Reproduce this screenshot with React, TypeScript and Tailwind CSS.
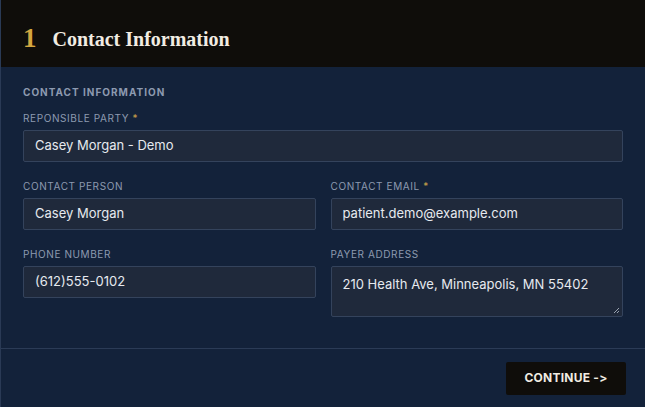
export default function App() {
  const label = "block text-[10px] tracking-[0.06em] text-[#8d9ab0] mb-[6px] leading-[12px]";
  const input = "w-full h-[32px] bg-[#1f293b] border border-[#34435c] rounded-[2px] px-[11px] text-[13px] text-[#e6e9ef] flex items-center";
  const star = <span className="text-[#c9a14a]"> *</span>;
  return (
    <div className="w-[645px] h-[407px] bg-[#13223a] flex flex-col border-l border-[#2a3a55]" style={{ fontFamily: "Inter, 'Open Sans', sans-serif" }}>
      <div className="h-[67px] bg-[#0f0d0a] flex items-center px-[22px] pt-[10px] shrink-0">
        <span className="text-[27px] font-bold text-[#d4a63f] mr-[16px] leading-none" style={{ fontFamily: "'Liberation Serif', serif" }}>1</span>
        <span className="text-[20px] font-bold text-[#f1ece2]" style={{ fontFamily: "'Liberation Serif', serif" }}>Contact Information</span>
      </div>
      <div className="px-[22px] pt-[19px] flex-1">
        <div className="text-[10px] font-bold tracking-[0.1em] text-[#8d9ab0] mb-[14px] leading-[12px]">CONTACT INFORMATION</div>
        <div className="mb-[18px]">
          <label className={label}>REPONSIBLE PARTY{star}</label>
          <div className={input}>Casey Morgan - Demo</div>
        </div>
        <div className="grid grid-cols-2 gap-x-[15px] gap-y-[18px]">
          <div>
            <label className={label}>CONTACT PERSON</label>
            <div className={input}>Casey Morgan</div>
          </div>
          <div>
            <label className={label}>CONTACT EMAIL{star}</label>
            <div className={input}>patient.demo@example.com</div>
          </div>
          <div>
            <label className={label}>PHONE NUMBER</label>
            <div className={input}>(612)555-0102</div>
          </div>
          <div>
            <label className={label}>PAYER ADDRESS</label>
            <div className="relative w-full h-[51px] bg-[#1f293b] border border-[#34435c] rounded-[2px] px-[11px] pt-[8px] text-[13px] text-[#e6e9ef]">
              210 Health Ave, Minneapolis, MN 55402
              <svg className="absolute right-[2px] bottom-[2px]" width="7" height="7" viewBox="0 0 7 7"><path d="M6 1L1 6M6 4L4 6" stroke="#9aa3b0" strokeWidth="1" /></svg>
            </div>
          </div>
        </div>
      </div>
      <div className="h-[59px] border-t border-[#2b3b56] flex items-center justify-end px-[19px] shrink-0">
        <div className="w-[120px] h-[33px] bg-[#0f0d0a] rounded-[2px] flex items-center justify-center text-[12px] font-bold tracking-[0.02em] text-[#f1ece2]">CONTINUE -&gt;</div>
      </div>
    </div>
  );
}
